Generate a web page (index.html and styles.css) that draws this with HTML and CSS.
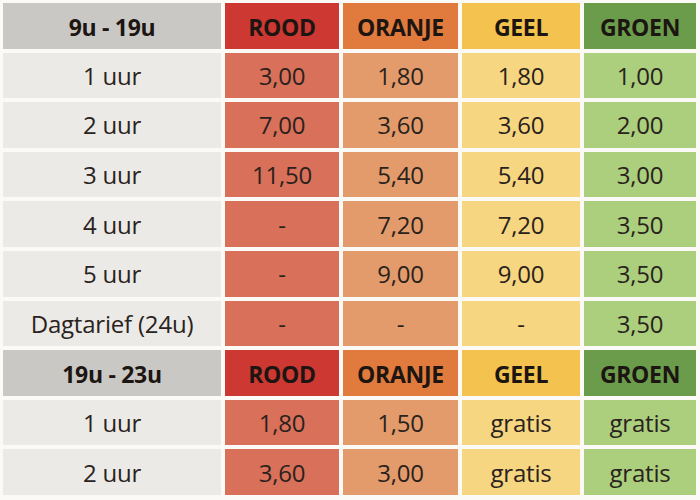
FILE: index.html
```html
<!DOCTYPE html>
<html lang="nl">
<head>
<meta charset="utf-8">
<title>Parkeertarieven</title>
<link rel="stylesheet" href="styles.css">
</head>
<body>
<div class="tariffs">
  <div class="cell head label">9u - 19u</div>
  <div class="cell head red">ROOD</div>
  <div class="cell head orange">ORANJE</div>
  <div class="cell head yellow">GEEL</div>
  <div class="cell head green">GROEN</div>

  <div class="cell label">1 uur</div>
  <div class="cell red">3,00</div>
  <div class="cell orange">1,80</div>
  <div class="cell yellow">1,80</div>
  <div class="cell green">1,00</div>

  <div class="cell label">2 uur</div>
  <div class="cell red">7,00</div>
  <div class="cell orange">3,60</div>
  <div class="cell yellow">3,60</div>
  <div class="cell green">2,00</div>

  <div class="cell label">3 uur</div>
  <div class="cell red">11,50</div>
  <div class="cell orange">5,40</div>
  <div class="cell yellow">5,40</div>
  <div class="cell green">3,00</div>

  <div class="cell label">4 uur</div>
  <div class="cell red">-</div>
  <div class="cell orange">7,20</div>
  <div class="cell yellow">7,20</div>
  <div class="cell green">3,50</div>

  <div class="cell label">5 uur</div>
  <div class="cell red">-</div>
  <div class="cell orange">9,00</div>
  <div class="cell yellow">9,00</div>
  <div class="cell green">3,50</div>

  <div class="cell label">Dagtarief (24u)</div>
  <div class="cell red">-</div>
  <div class="cell orange">-</div>
  <div class="cell yellow">-</div>
  <div class="cell green">3,50</div>

  <div class="cell head label">19u - 23u</div>
  <div class="cell head red">ROOD</div>
  <div class="cell head orange">ORANJE</div>
  <div class="cell head yellow">GEEL</div>
  <div class="cell head green">GROEN</div>

  <div class="cell label">1 uur</div>
  <div class="cell red">1,80</div>
  <div class="cell orange">1,50</div>
  <div class="cell yellow">gratis</div>
  <div class="cell green">gratis</div>

  <div class="cell label">2 uur</div>
  <div class="cell red">3,60</div>
  <div class="cell orange">3,00</div>
  <div class="cell yellow">gratis</div>
  <div class="cell green">gratis</div>
</div>
</body>
</html>
```

FILE: styles.css
```css
html, body {
  margin: 0;
  padding: 0;
  background: #fbfaf6;
}

body {
  width: 700px;
  height: 500px;
  overflow: hidden;
  font-family: "Open Sans", "Lato", sans-serif;
}

.tariffs {
  display: grid;
  grid-template-columns: 218px 114px 115px 118px 112px;
  grid-auto-rows: 45.6px;
  gap: 4px;
  padding: 3px;
}

.cell {
  display: flex;
  align-items: center;
  justify-content: center;
  font-size: 24px;
  color: #2a221c;
  letter-spacing: -0.2px;
}

.label { background: #ebeae6; }
.red { background: #d9705a; }
.orange { background: #e39b6b; }
.yellow { background: #f6d680; }
.green { background: #abcf7d; }

.head {
  font-weight: 700;
  color: #1c1511;
  font-size: 23px;
  letter-spacing: -0.3px;
  padding-top: 3px;
}
.head.label { background: #c9c8c4; }
.head.red { background: #cd3932; }
.head.orange { background: #e07b3d; }
.head.yellow { background: #f3c24f; }
.head.green { background: #6b9c4c; }
```
